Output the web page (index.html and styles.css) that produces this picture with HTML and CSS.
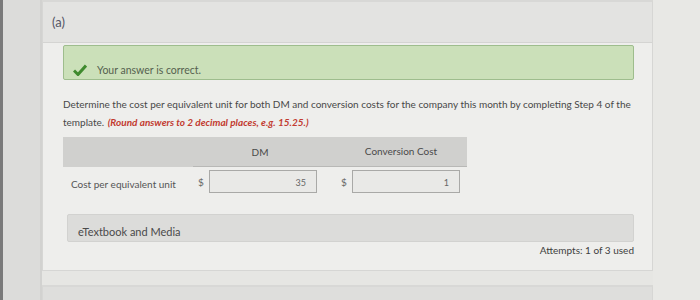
FILE: index.html
```html
<!DOCTYPE html>
<html>
<head>
<meta charset="utf-8">
<link rel="stylesheet" href="styles.css">
</head>
<body>
<div class="page">
  <div class="side"></div>
  <div class="main">
    <div class="card">
      <div class="card-head">(a)</div>
      <div class="card-body">
        <div class="correct">
          <svg class="check" width="14" height="12" viewBox="0 0 14 12"><path d="M1 6.5 L5 10.5 L13 1.5" fill="none" stroke="#3f8a2e" stroke-width="3" stroke-linejoin="miter"/></svg>
          <span>Your answer is correct.</span>
        </div>
        <p class="question">Determine the cost per equivalent unit for both DM and conversion costs for the company this month by completing Step 4 of the<br>template. <em class="hint">(Round answers to 2 decimal places, e.g. 15.25.)</em></p>
        <div class="grid">
          <div class="th th-label"></div>
          <div class="th th-col">DM</div>
          <div class="th th-col th-last">Conversion Cost</div>
          <div class="td-label">Cost per equivalent unit</div>
          <div class="cell"><span class="dollar">$</span><span class="input">35</span></div>
          <div class="cell cell-last"><span class="dollar">$</span><span class="input">1</span></div>
        </div>
        <div class="media">eTextbook and Media</div>
        <div class="attempts">Attempts: 1 of 3 used</div>
      </div>
    </div>
    <div class="card next"></div>
  </div>
  <div class="rest"></div>
</div>
</body>
</html>
```

FILE: styles.css
```css
* { box-sizing: border-box; }
html, body { margin: 0; height: 100%; }
body {
  font-family: Lato, "Open Sans", sans-serif;
  color: #4a4a4a;
  background: #e6e6e3;
}
.page { display: flex; height: 300px; overflow: hidden; }
.side {
  width: 42px;
  flex: none;
  background: #dcdcda;
  border-left: 3px solid #7a7a7a;
  border-right: 2px solid #d2d2d0;
}
.main { width: 611px; flex: none; }
.rest { flex: 1; background: #e8e8e5; }
.card {
  background: #eeeeec;
  border: 1px solid #d6d6d4;
  border-top: 2px solid #d8d8d6;
}
.card-head {
  height: 41px;
  background: #e3e3e1;
  border-bottom: 1px solid #d4d4d2;
  padding: 12px 0 0 9px;
  font-size: 13px;
  color: #556;
}
.card-body { padding: 2px 18px 14px 20px; }
.correct {
  height: 35px;
  background: #cbe0b9;
  border: 1px solid #9ebd8d;
  border-radius: 2px;
  display: flex;
  align-items: center;
  padding: 15px 0 0 9px;
  font-size: 10.5px;
  color: #55604f;
}
.check { margin-right: 10px; }
.question {
  margin: 15px 0 0 0;
  font-size: 10px;
  line-height: 18px;
  color: #484848;
}
.hint { color: #c23b30; font-weight: bold; margin-left: 1px; }
.grid {
  margin-top: 6px;
  display: grid;
  grid-template-columns: 130px 140px 134px;
  width: 404px;
}
.th {
  height: 30px;
  background: #d0d0ce;
  font-size: 10px;
  display: flex;
  align-items: center;
  justify-content: center;
  color: #4a4a4a;
}
.th-col { border-bottom: 1px solid #b8b8b6; padding-right: 6px; }
.th-last { padding-bottom: 2px; padding-left: 8px; }
.td-label {
  font-size: 10px;
  padding: 11px 0 0 8px;
  color: #555;
}
.cell {
  display: flex;
  align-items: center;
  padding-top: 1px;
  height: 28px;
}
.cell-last { padding-left: 3px; }
.dollar { width: 16px; font-size: 10px; color: #666; padding-left: 5px; }
.input {
  width: 108px;
  height: 23px;
  border: 1px solid #a9a9a7;
  background: #e9e9e7;
  font-size: 9px;
  color: #666;
  text-align: right;
  padding: 6px 10px 0 0;
}
.media {
  margin: 19px 0 0 4px;
  height: 28px;
  background: #dcdcda;
  border: 1px solid #d2d2d0;
  border-radius: 2px;
  font-size: 11px;
  color: #4a4a4a;
  padding: 10px 0 0 10px;
}
.attempts {
  text-align: right;
  font-size: 10px;
  margin-top: 2px;
  color: #3e3e3e;
}
.next {
  margin-top: 14px;
  height: 30px;
  background: #dededc;
}
```
